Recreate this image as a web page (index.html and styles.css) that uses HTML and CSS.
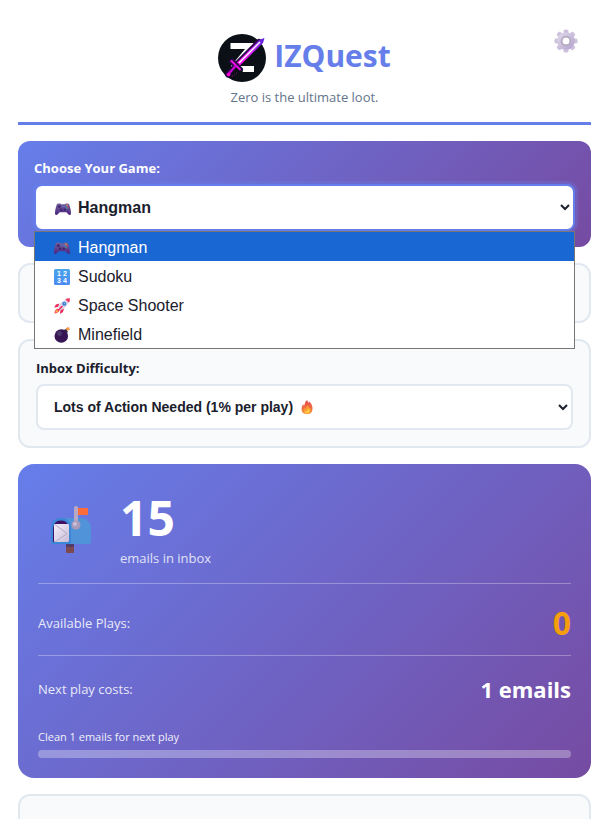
FILE: index.html
```html
<!DOCTYPE html>
<html lang="en">
<head>
    <meta charset="UTF-8">
    <meta name="viewport" content="width=device-width, initial-scale=1.0">
    <title>IZQuest</title>
    <link rel="stylesheet" href="styles.css">
</head>
<body>
    <!-- Shared icons -->
    <svg class="icon-defs" width="0" height="0" aria-hidden="true">
        <defs>
            <linearGradient id="pad-fill" x1="0" y1="0" x2="0" y2="1">
                <stop offset="0" stop-color="#75649a"/>
                <stop offset="1" stop-color="#4b2383"/>
            </linearGradient>
            <linearGradient id="gear-fill" x1="0" y1="0" x2="1" y2="1">
                <stop offset="0" stop-color="#dcd4e6"/>
                <stop offset="1" stop-color="#b9a8d3"/>
            </linearGradient>
            <linearGradient id="sword-fill" x1="0" y1="1" x2="1" y2="0">
                <stop offset="0" stop-color="#ff00e6"/>
                <stop offset="0.5" stop-color="#d21cf5"/>
                <stop offset="1" stop-color="#4a22d8"/>
            </linearGradient>
            <linearGradient id="num-fill" x1="0" y1="0" x2="0" y2="1">
                <stop offset="0" stop-color="#4aa5ea"/>
                <stop offset="1" stop-color="#4a8af5"/>
            </linearGradient>
            <linearGradient id="fire-fill" x1="0" y1="0" x2="0" y2="1">
                <stop offset="0" stop-color="#e5484f"/>
                <stop offset="1" stop-color="#fb8b35"/>
            </linearGradient>
            <linearGradient id="letter-fill" x1="0" y1="0" x2="1" y2="1">
                <stop offset="0" stop-color="#f4eff8"/>
                <stop offset="1" stop-color="#c9bcd9"/>
            </linearGradient>
            <symbol id="gamepad" viewBox="0 0 16 16">
                <path d="M3.2 2.6h2.2l.7.6h3.8l.7-.6h2.2c1 0 1.4.7 1.8 2 .7 2.300 1.400 5.300 1.400 7.600 0 1.600-1.300 2.300-2.500 1.300L11.300 11.300H4.700L2.500 13.500C1.300 14.500 0 13.800 0 12.200c0-2.300.7-5.300 1.400-7.600.4-1.300.8-2 1.800-2z" fill="url(#pad-fill)"/>
                <circle cx="4.300" cy="5.600" r="1.400" fill="#3e2670"/>
                <circle cx="6.200" cy="8.800" r="1.300" fill="#3e2670"/>
                <circle cx="9.800" cy="8.800" r="1.300" fill="#3e2670"/>
                <circle cx="7.200" cy="5.600" r=".5" fill="#4d8bea"/>
                <circle cx="8.900" cy="5.600" r=".5" fill="#4d8bea"/>
                <circle cx="11.900" cy="4.300" r=".8" fill="#e8a33c"/>
                <circle cx="10.700" cy="5.700" r=".7" fill="#4e7fe0"/>
                <circle cx="13.200" cy="5.700" r=".8" fill="#e5484f"/>
                <circle cx="11.900" cy="7.100" r=".8" fill="#35b887"/>
            </symbol>
        </defs>
    </svg>

    <main>
        <header>
            <div class="brand">
                <svg class="logo" viewBox="0 0 48 48" aria-hidden="true">
                    <circle cx="24" cy="24" r="24" fill="#0b1016"/>
                    <path d="M12.500 9h23v5.500L20.500 32H36v6H17l-4-6 14-17H12.500z" fill="#fff"/>
                    <path d="M41 8L20 29M14 27.500l8 8M18 32l-8 8.500" stroke="#2b0748" stroke-width="6" stroke-linecap="round"/>
                    <path d="M12 33h10l3 5v2H12z" fill="#0b1016"/>
                    <path d="M46.500 4l-5 1.800L19 28.500l3 3L45 9z" fill="url(#sword-fill)"/>
                    <path d="M42 8L21 29" stroke="#fff" stroke-width="1.500"/>
                    <path d="M13.500 27l8.500 8.500" stroke="#ef12e6" stroke-width="2" stroke-linecap="round"/>
                    <path d="M17.500 32L11 39.500" stroke="#c800d4" stroke-width="2.500" stroke-linecap="round"/>
                    <circle cx="10.500" cy="40.500" r="1.800" fill="#ff00d4"/>
                    <path d="M14 42h1M18 39h1M16 41h1" stroke="#8d0a79"/>
                </svg>
                <h1>IZQuest</h1>
            </div>
            <p class="tagline">Zero is the ultimate loot.</p>
            <button class="settings-btn" type="button" aria-label="Settings">
                <svg viewBox="0 0 24 24" aria-hidden="true">
                    <g fill="#cdc1dd">
                        <path id="tooth" d="M9.700 1q2.300-1.200 4.600 0l.4 4H9.300z"/>
                        <use href="#tooth" transform="rotate(45 12 12)"/>
                        <use href="#tooth" transform="rotate(90 12 12)"/>
                        <use href="#tooth" transform="rotate(135 12 12)"/>
                        <use href="#tooth" transform="rotate(180 12 12)"/>
                        <use href="#tooth" transform="rotate(225 12 12)"/>
                        <use href="#tooth" transform="rotate(270 12 12)"/>
                        <use href="#tooth" transform="rotate(315 12 12)"/>
                    </g>
                    <circle cx="12" cy="12" r="6.200" fill="none" stroke="url(#gear-fill)" stroke-width="5"/>
                    <circle cx="12" cy="12" r="4.400" fill="none" stroke="#b5abc0" stroke-width="1.800"/>
                </svg>
            </button>
        </header>

        <section class="game-card">
            <label for="game">Choose Your Game:</label>
            <div class="select-wrap">
                <select id="game" class="focused">
                    <option>Hangman</option>
                    <option>Sudoku</option>
                    <option>Space Shooter</option>
                    <option>Minefield</option>
                </select>
                <svg class="select-icon"><use href="#gamepad"/></svg>
                <ul class="options" role="listbox" aria-label="Games">
                    <li class="active" role="option" aria-selected="true">
                        <svg><use href="#gamepad"/></svg>Hangman
                    </li>
                    <li role="option">
                        <svg viewBox="0 0 16 16">
                            <rect width="16" height="16" rx="1.500" fill="url(#num-fill)"/>
                            <g class="digits"><text x="3" y="7">1</text><text x="9" y="7">2</text><text x="3" y="14">3</text><text x="9" y="14">4</text></g>
                        </svg>Sudoku
                    </li>
                    <li role="option">
                        <svg viewBox="0 0 16 16">
                            <path d="M5.500 5.500L2 6.500 0 9.500l4-.5zM10 10.500l-1 3.500-3 2 .5-4.500z" fill="#e8295c"/>
                            <path d="M3.500 10.500Q.5 11.500.5 15.500q4-.3 5-3z" fill="#fb5f4e"/>
                            <path d="M3 12q-1 .6-1 2.300 1.600-.2 2.300-1.200z" fill="#ffc44a"/>
                            <path d="M15 1Q9 .8 4 9l3 3.200Q15.300 8 15 1z" fill="#ddd3e5"/>
                            <path d="M15.800.2q-2.500-.3-4.500 1l3.600 3.600q1.300-2 .9-4.600z" fill="#ef3965"/>
                            <circle cx="10.300" cy="5.800" r="2" fill="#3474c9"/>
                            <circle cx="10.600" cy="5.500" r="1" fill="#67b5f1"/>
                            <path d="M8 8.500L4.500 12" stroke="#e8295c" stroke-width="1.600" stroke-linecap="round"/>
                        </svg>Space Shooter
                    </li>
                    <li role="option">
                        <svg viewBox="0 0 16 16">
                            <circle cx="7.300" cy="9" r="6.800" fill="#371653"/>
                            <circle cx="5.500" cy="6.500" r="2.500" fill="#4b386b"/>
                            <path d="M9.500 3l2.500-1 2 3-2 1.500z" fill="#34264d"/>
                            <path d="M12 3q.2-1.500 2-1.500" stroke="#a9804f" stroke-width="1.300" fill="none"/>
                            <path d="M13 0l1 .7 1.500-.5-.3 1.400.8 1.100-1.400.2-.8 1.200-.7-1.400L11.700 2l1.200-.7z" fill="#fc762b"/>
                            <circle cx="14" cy="2" r=".8" fill="#ffcb4b"/>
                        </svg>Minefield
                    </li>
                </ul>
            </div>
        </section>

        <section class="panel timer-card"></section>

        <section class="panel">
            <label for="difficulty">Inbox Difficulty:</label>
            <div class="select-wrap">
                <select id="difficulty">
                    <option>Lots of Action Needed (1% per play)</option>
                </select>
                <svg class="fire-icon" viewBox="0 0 14 14" aria-hidden="true">
                    <path d="M7 0q.6 1.700 2 3 .3-.8.2-1.600 3.300 3 3.300 7.100Q12.500 14 7 14T1.500 8.800Q1.500 6 3.200 4q.1 1.300.8 1.900Q4.300 2 7 0z" fill="url(#fire-fill)"/>
                    <path d="M8 5q.2 2 2 3.500 1 1 1 2.400Q10.500 13.500 7 13.500T3.500 10.200q0-1.600 1-2.500.4 1 1.200 1.200Q5.700 6.800 8 5z" fill="#fb9a37"/>
                    <path d="M8.300 8.500q2 1.600 1.600 3-.6 2-3 2T4.500 11q1.200.7 2 .2.800-.8 1.800-2.700z" fill="#ffc83e"/>
                </svg>
            </div>
        </section>

        <section class="stats-card">
            <div class="inbox">
                <svg class="mailbox" viewBox="0 0 48 48" aria-hidden="true">
                    <rect x="18" y="39" width="8" height="9" rx="1" fill="#7c4950"/>
                    <rect x="18" y="39" width="8" height="3" fill="#513b68"/>
                    <path d="M10 13h22q11 0 11 12v11q0 3-2 3H13z" fill="#5093d8"/>
                    <path d="M3 25q0-12 10-12T23 25v14H4.500Q3 39 3 37z" fill="#3b86d6"/>
                    <path d="M5 25q0-9.500 8-9.500t8 9.500v12H5z" fill="#3f1164"/>
                    <rect x="6" y="19" width="15" height="18" rx="1" fill="url(#letter-fill)"/>
                    <path d="M7 19.500l12 9-12 8.500" fill="none" stroke="#b5a8c4" stroke-width="1"/>
                    <path d="M29 3h10q1 0 1 1v6H29z" fill="#fb6c3a"/>
                    <rect x="26" y="1" width="4" height="20" rx="2" fill="#b7a9c6"/>
                    <circle cx="28" cy="20" r="4.500" fill="#a99bba"/>
                    <circle cx="27" cy="19" r="2" fill="#c9bfd5"/>
                </svg>
                <div>
                    <div class="count">15</div>
                    <div class="count-label">emails in inbox</div>
                </div>
            </div>
            <div class="stat-row">
                <span>Available Plays:</span>
                <strong class="plays">0</strong>
            </div>
            <div class="stat-row cost-row">
                <span>Next play costs:</span>
                <strong class="cost">1 emails</strong>
            </div>
            <p class="progress-label">Clean 1 emails for next play</p>
            <div class="progress"></div>
        </section>

        <section class="panel next-card"></section>
    </main>
</body>
</html>
```
FILE: styles.css
```css
* {
    box-sizing: border-box;
    margin: 0;
    padding: 0;
}
html {
    overflow: hidden;
}
body {
    font-family: 'Segoe UI', 'Open Sans', sans-serif;
    font-size: 13px;
    color: #1a202c;
    background-color: #fff;
}
.icon-defs {
    position: absolute;
}
main {
    display: flex;
    flex-direction: column;
    gap: 16px;
    padding: 32px 19px 16px 18px;
}
header {
    position: relative;
    text-align: center;
    padding-bottom: 16px;
    border-bottom: 3px solid #667eea;
}
.brand {
    display: flex;
    justify-content: center;
    align-items: center;
    gap: 8px;
    height: 52px;
}
.logo {
    width: 48px;
    height: 48px;
}
h1 {
    font-size: 30px;
    line-height: 40px;
    padding-bottom: 4px;
    color: #667eea;
}
.tagline {
    margin-top: 4px;
    line-height: 18px;
    color: #64748b;
}
.settings-btn {
    position: absolute;
    top: -3px;
    right: 13px;
    width: 24px;
    height: 24px;
    border: none;
    background: none;
    cursor: pointer;
}
.settings-btn svg {
    display: block;
    width: 100%;
    height: 100%;
}
label {
    display: block;
    padding-top: 2px;
    margin-bottom: 7px;
    font-weight: 700;
    line-height: 18px;
}
.game-card {
    padding: 16px;
    border-radius: 12px;
    background: linear-gradient(135deg, #667eea 0%, #764ba2 100%);
}
.game-card label {
    color: #fff;
}
.select-wrap {
    position: relative;
}
select {
    display: block;
    width: 100%;
    height: 46px;
    padding: 0 0 0 12px;
    border: 2px solid #e2e8f0;
    border-radius: 8px;
    outline: none;
    background-color: #fff;
    color: #1a202c;
    font-family: 'Liberation Sans', Arial, sans-serif;
    font-size: 14px;
    font-weight: 700;
    cursor: pointer;
}
#game {
    height: 47px;
    padding-left: 38px;
    font-size: 16px;
}
select.focused {
    border-color: #667eea;
    box-shadow: 0 0 0 3px rgba(102, 126, 234, 0.3);
}
.select-icon {
    position: absolute;
    top: 17px;
    left: 21px;
    width: 16px;
    height: 16px;
}
.fire-icon {
    position: absolute;
    top: 16px;
    left: 264px;
    width: 14px;
    height: 14px;
}
/* open list of the game select */
.options {
    position: absolute;
    top: 100%;
    left: 0;
    right: 0;
    z-index: 10;
    list-style: none;
    border: 1px solid #767676;
    background-color: #fff;
    font-family: 'Liberation Sans', Arial, sans-serif;
    font-size: 16px;
}
.options li {
    display: flex;
    align-items: center;
    gap: 8px;
    height: 29px;
    padding-top: 2px;
    padding-left: 19px;
}
.options li.active {
    background-color: #1967d2;
    color: #fff;
}
.options svg {
    width: 16px;
    height: 16px;
}
.digits {
    fill: #fff;
    font-size: 7px;
    font-weight: 700;
}
.panel {
    padding: 16px;
    border: 2px solid #e2e8f0;
    border-radius: 12px;
    background-color: #f8fafc;
}
.timer-card {
    height: 60px;
}
.next-card {
    min-height: 100px;
}
.stats-card {
    padding: 20px;
    border-radius: 16px;
    color: #fff;
    background: linear-gradient(135deg, #667eea 0%, #764ba2 100%);
}
.inbox {
    display: flex;
    align-items: center;
    gap: 24px;
    height: 100px;
    padding: 0 10px 10px;
    border-bottom: 1px solid rgba(255, 255, 255, 0.3);
}
.mailbox {
    width: 48px;
    height: 48px;
}
.count {
    font-size: 48px;
    font-weight: 700;
    line-height: 54px;
}
.count-label {
    line-height: 18px;
    margin-top: 4px;
    opacity: 0.8;
}
.stat-row {
    display: flex;
    justify-content: space-between;
    align-items: center;
    height: 72px;
    padding-top: 6px;
    border-bottom: 1px solid rgba(255, 255, 255, 0.3);
}
.stat-row span {
    opacity: 0.85;
}
.plays {
    font-size: 32px;
    color: #f59e0b;
}
.cost {
    font-size: 22px;
}
.cost-row {
    height: 60px;
    margin-bottom: 12px;
    border-bottom: none;
}
.progress-label {
    font-size: 11px;
    line-height: 18px;
    margin-bottom: 4px;
    opacity: 0.9;
}
.progress {
    height: 8px;
    border-radius: 4px;
    background-color: rgba(255, 255, 255, 0.3);
}
```
